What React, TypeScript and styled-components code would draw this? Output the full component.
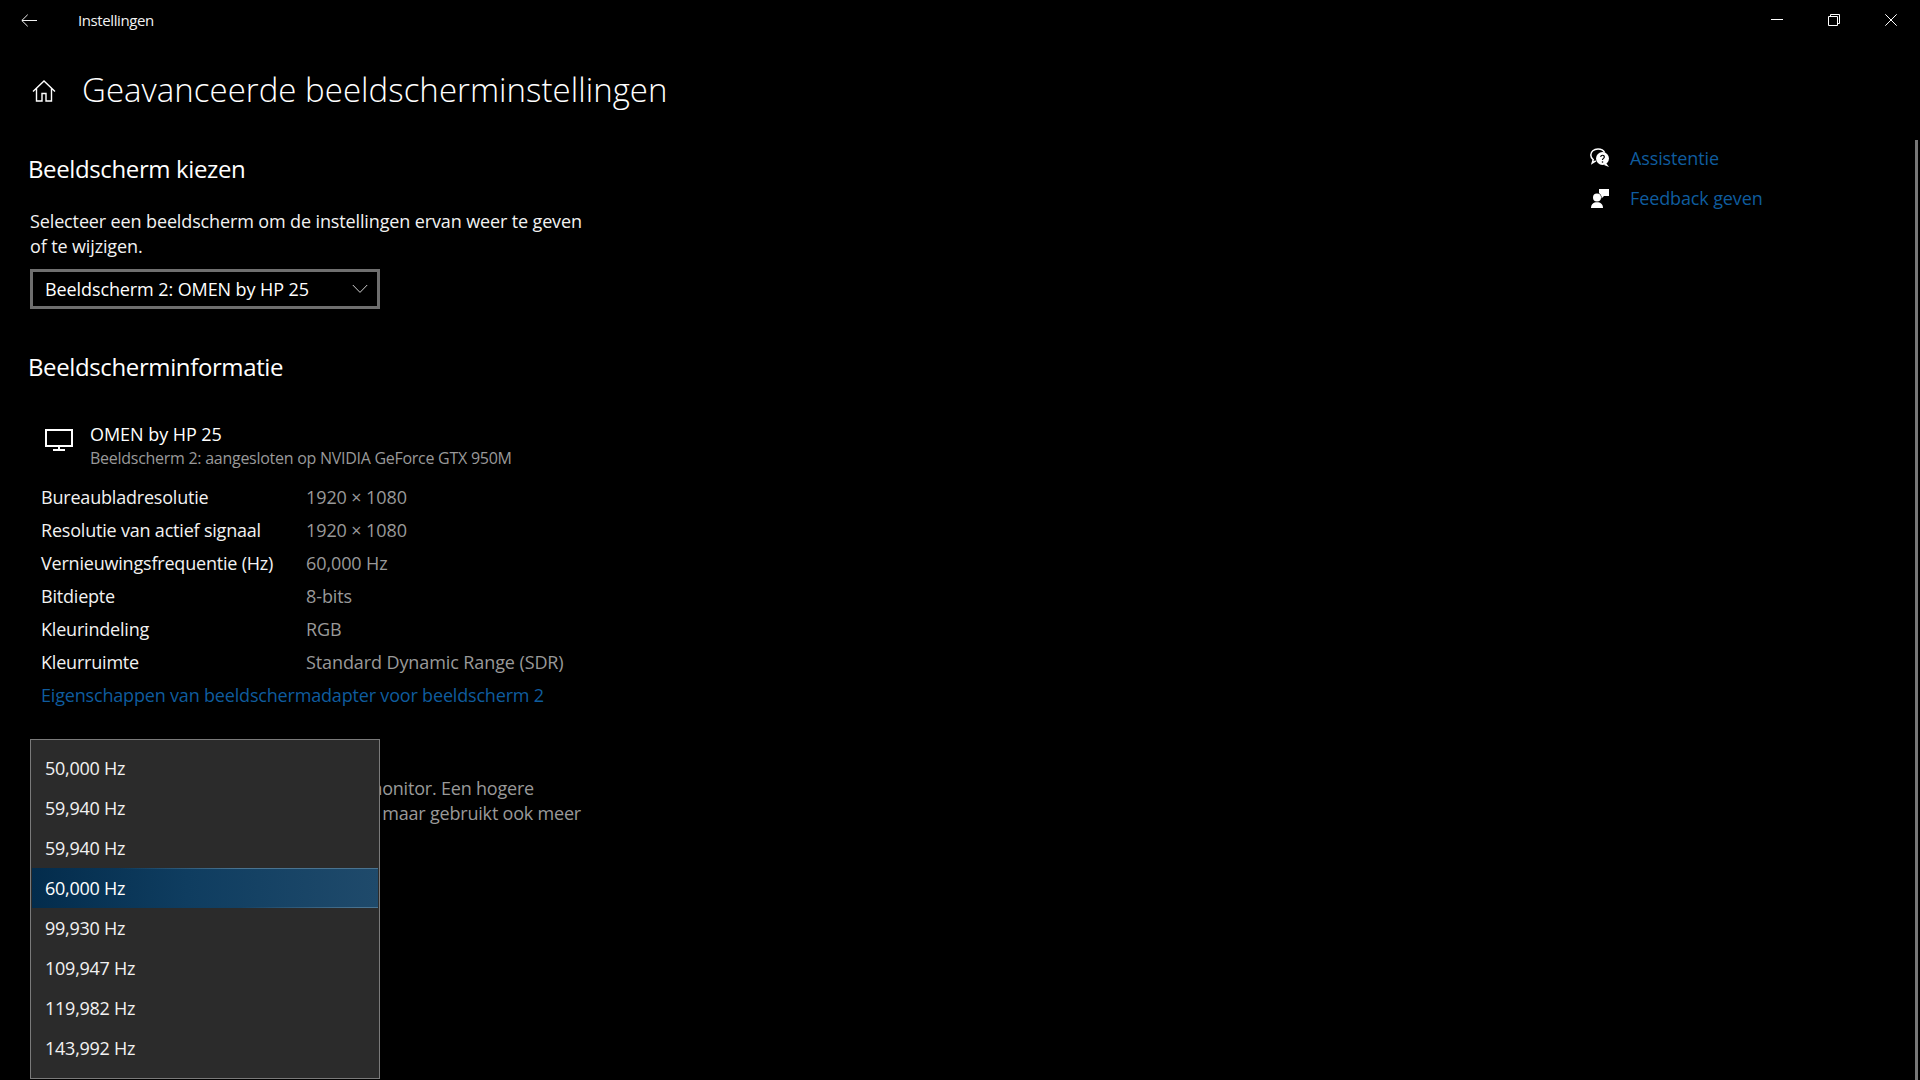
import styled, { createGlobalStyle } from "styled-components";

const GlobalStyle = createGlobalStyle`
  html, body { margin: 0; padding: 0; background: #000; }
  body { font-family: "Open Sans", "Noto Sans", "Liberation Sans", sans-serif; color: #fff; }
`;

/* ── Window ──────────────────────────────────────────── */

const Page = styled.div`
  width: 1920px;
  height: 1080px;
  position: relative;
  overflow: hidden;
  background: #000;
`;

const TitleBar = styled.header`
  height: 40px;
  display: flex;
  align-items: center;
  padding-left: 21px;
`;

const BackIcon = styled.svg`
  width: 16px;
  height: 13px;
  display: block;
  margin-right: 41px;
`;

const AppName = styled.span`
  font-size: 15px;
  letter-spacing: -0.4px;
  color: #f2f2f2;
`;

const WindowControls = styled.div`
  margin-left: auto;
  display: flex;
  gap: 45px;
  padding-right: 23px;
  align-items: center;
`;

const ControlIcon = styled.svg`
  width: 12px;
  height: 12px;
  display: block;
`;

const Scrollbar = styled.div`
  position: absolute;
  right: 2px;
  top: 140px;
  bottom: 0;
  width: 3px;
  background: #777;
`;

const Body = styled.div`
  display: flex;
`;

/* ── Main column ─────────────────────────────────────── */

const Main = styled.main`
  width: 1590px;
`;

const PageHeading = styled.div`
  height: 60px;
  margin-top: 20px;
  display: flex;
  align-items: center;
  padding-left: 32px;
  gap: 26px;
`;

const HomeIcon = styled.svg`
  width: 24px;
  height: 24px;
  display: block;
  margin-top: 2px;
`;

const PageTitle = styled.h1`
  margin: -2px 0 0;
  font-size: 33px;
  font-weight: 300;
  letter-spacing: 0.03px;
  white-space: nowrap;
`;

const SectionTitle = styled.h2<{ $top: number }>`
  margin: ${(p) => p.$top}px 0 0 28px;
  font-size: 24px;
  line-height: 32px;
  font-weight: 400;
  letter-spacing: -0.38px;
`;

const Paragraph = styled.p`
  margin: 24px 0 0 30px;
  width: 565px;
  font-size: 18px;
  line-height: 25px;
  letter-spacing: -0.13px;
  color: #f2f2f2;
`;

const Select = styled.div`
  box-sizing: border-box;
  margin: 10px 0 0 30px;
  width: 350px;
  height: 40px;
  border: 3px solid #6f6f6f;
  display: flex;
  align-items: center;
  justify-content: space-between;
  padding: 0 9px 0 12px;
  font-size: 18px;
  letter-spacing: -0.1px;
`;

const Chevron = styled.svg`
  width: 16px;
  height: 10px;
  display: block;
`;

/* ── Display info ────────────────────────────────────── */

const MonitorRow = styled.div`
  margin: 39px 0 0 45px;
  display: flex;
  gap: 17px;
  align-items: flex-start;
`;

const MonitorIcon = styled.svg`
  width: 28px;
  height: 22px;
  display: block;
  margin-top: 7px;
`;

const MonitorText = styled.div`
  display: flex;
  flex-direction: column;
`;

const MonitorName = styled.span`
  font-size: 18px;
  line-height: 24px;
  letter-spacing: -0.05px;
`;

const MonitorSub = styled.span`
  font-size: 16px;
  line-height: 24px;
  letter-spacing: -0.27px;
  color: #999;
`;

const InfoList = styled.dl`
  margin: 10px 0 0 41px;
  display: grid;
  grid-template-columns: 265px 1fr;
  grid-auto-rows: 33px;
  align-items: center;
  font-size: 18px;
  letter-spacing: -0.2px;
`;

const InfoLabel = styled.dt`
  color: #f2f2f2;
`;

const InfoValue = styled.dd`
  margin: 0;
  letter-spacing: -0.1px;
  color: #999;
`;

const AdapterLink = styled.a`
  display: block;
  margin: 1px 0 0 41px;
  font-size: 18px;
  line-height: 33px;
  letter-spacing: -0.18px;
  color: #0f5c9e;
`;

/* ── Refresh rate section with open list ─────────────── */

const RefreshSection = styled.section`
  position: relative;
  margin-top: 27px;
  height: 340px;
`;

const RefreshText = styled.p`
  margin: 0;
  padding-top: 37px;
  padding-left: 30px;
  width: 551px;
  font-size: 18px;
  line-height: 25px;
  letter-spacing: -0.2px;
  color: #999;
`;

const RefreshLine = styled.span`
  display: block;
  text-align: right;
  white-space: nowrap;
`;

const ShortLine = styled(RefreshLine)`
  padding-right: 47px;
`;

const Popup = styled.ul`
  box-sizing: border-box;
  position: absolute;
  left: 30px;
  top: 0;
  width: 350px;
  height: 340px;
  margin: 0;
  padding: 8px 1px;
  list-style: none;
  background: #2b2b2b;
  border: 1px solid #7a7a7a;
`;

const PopupItem = styled.li<{ $selected?: boolean }>`
  height: 40px;
  display: flex;
  align-items: center;
  padding-left: 13px;
  font-size: 18px;
  letter-spacing: -0.25px;
  color: #f2f2f2;
  ${(p) =>
    p.$selected &&
    `
    background:
      linear-gradient(90deg, rgba(70,110,140,0) 25%, #4a7390 60%) top / 100% 1px no-repeat,
      linear-gradient(90deg, rgba(70,110,140,0) 60%, #4a7390 95%) bottom / 100% 1px no-repeat,
      linear-gradient(90deg, #032c4c 0%, #0f3d60 45%, #1f4a6b 100%);
    color: #fff;
  `}
`;

/* ── Right column ────────────────────────────────────── */

const Aside = styled.aside`
  padding-top: 98px;
  display: flex;
  flex-direction: column;
`;

const HelpLink = styled.a`
  height: 40px;
  display: flex;
  align-items: center;
  gap: 20px;
  font-size: 18px;
  letter-spacing: -0.12px;
  color: #0f5c9e;
`;

const HelpIcon = styled.svg`
  width: 20px;
  height: 20px;
  display: block;
`;

/* ── Data ────────────────────────────────────────────── */

const INFO = [
  ["Bureaubladresolutie", "1920 × 1080"],
  ["Resolutie van actief signaal", "1920 × 1080"],
  ["Vernieuwingsfrequentie (Hz)", "60,000 Hz"],
  ["Bitdiepte", "8-bits"],
  ["Kleurindeling", "RGB"],
  ["Kleurruimte", "Standard Dynamic Range (SDR)"],
];

const RATES = [
  "50,000 Hz",
  "59,940 Hz",
  "59,940 Hz",
  "60,000 Hz",
  "99,930 Hz",
  "109,947 Hz",
  "119,982 Hz",
  "143,992 Hz",
];

/* ── Page ────────────────────────────────────────────── */

export default function App() {
  return (
    <Page>
      <GlobalStyle />
      <TitleBar>
        <BackIcon viewBox="0 0 16 13" fill="none" stroke="#f2f2f2" strokeWidth="1">
          <path d="M16 6.500H1M6.700 .7 .8 6.500l5.900 5.800" />
        </BackIcon>
        <AppName>Instellingen</AppName>
        <WindowControls>
          <ControlIcon viewBox="0 0 12 12" fill="none" stroke="#fff" strokeWidth="1">
            <path d="M0 5.500h12" />
          </ControlIcon>
          <ControlIcon viewBox="0 0 12 12" fill="none" stroke="#fff" strokeWidth="1">
            <path d="M.5 2.500h9v9h-9zM2.500 2.500v-2h9v9h-2" />
          </ControlIcon>
          <ControlIcon viewBox="0 0 12 12" fill="none" stroke="#fff" strokeWidth="1">
            <path d="M.3.3l11.400 11.400M11.700.3.3 11.700" />
          </ControlIcon>
        </WindowControls>
      </TitleBar>

      <Body>
        <Main>
          <PageHeading>
            <HomeIcon viewBox="0 0 24 24" fill="none" stroke="#fff" strokeWidth="1.400">
              <path d="M1 12.500 12 2l11 10.500M4.500 9.500v12.500h5.500v-7.500h4V22h5.500V9.500" />
            </HomeIcon>
            <PageTitle>Geavanceerde beeldscherminstellingen</PageTitle>
          </PageHeading>

          <SectionTitle $top={33}>Beeldscherm kiezen</SectionTitle>
          <Paragraph>
            Selecteer een beeldscherm om de instellingen ervan weer te geven of te wijzigen.
          </Paragraph>
          <Select>
            <span>Beeldscherm 2: OMEN by HP 25</span>
            <Chevron viewBox="0 0 16 10" fill="none" stroke="#d0d0d0" strokeWidth="1">
              <path d="M.8 1 8 8.400 15.200 1" />
            </Chevron>
          </Select>

          <SectionTitle $top={42}>Beeldscherminformatie</SectionTitle>
          <MonitorRow>
            <MonitorIcon viewBox="0 0 28 22" fill="none" stroke="#fff" strokeWidth="2">
              <path d="M1 1h26v16H1zM14 17v4M8 21h12" />
            </MonitorIcon>
            <MonitorText>
              <MonitorName>OMEN by HP 25</MonitorName>
              <MonitorSub>Beeldscherm 2: aangesloten op NVIDIA GeForce GTX 950M</MonitorSub>
            </MonitorText>
          </MonitorRow>
          <InfoList>
            {INFO.flatMap(([label, value]) => [
              <InfoLabel key={label}>{label}</InfoLabel>,
              <InfoValue key={label + "-value"}>{value}</InfoValue>,
            ])}
          </InfoList>
          <AdapterLink>Eigenschappen van beeldschermadapter voor beeldscherm 2</AdapterLink>

          <RefreshSection>
            <RefreshText>
              <ShortLine>Kies de vernieuwingsfrequentie voor je monitor. Een hogere</ShortLine>
              <RefreshLine>frequentie zorgt voor vloeiender beeld maar gebruikt ook meer</RefreshLine>
            </RefreshText>
            <Popup>
              {RATES.map((rate, i) => (
                <PopupItem key={i} $selected={i === 3}>
                  {rate}
                </PopupItem>
              ))}
            </Popup>
          </RefreshSection>
        </Main>

        <Aside>
          <HelpLink>
            <HelpIcon viewBox="0 0 20 20">
              <path
                d="M8 1C3.800 1 .8 3.600 .8 7c0 1.900.9 3.500 2.400 4.600L2.200 15l3.600-2.200"
                fill="none"
                stroke="#fff"
                strokeWidth="1.500"
              />
              <path d="M8 1c3 0 5.600 1.400 6.600 3.600" fill="none" stroke="#fff" strokeWidth="1.500" />
              <circle cx="12.500" cy="10.500" r="6.500" fill="#fff" />
              <path d="M16 15l3 4-5-2z" fill="#fff" />
              <path d="M10.700 9c.2-2.400 3.800-2.200 3.600 0 0 1.400-1.800 1.400-1.800 3" fill="none" stroke="#000" strokeWidth="1.200" />
              <circle cx="12.500" cy="14" r=".8" fill="#000" />
            </HelpIcon>
            <span>Assistentie</span>
          </HelpLink>
          <HelpLink>
            <HelpIcon viewBox="0 0 20 20" fill="#fff">
              <circle cx="7" cy="9.500" r="4" />
              <path d="M1 20c0-4 2.500-5.800 6-5.800s6 1.800 6 5.800z" />
              <path d="M9 1h10v7h-5l-2.500 2.500V8.300A5.500 5.500 0 0 0 9 5z" />
            </HelpIcon>
            <span>Feedback geven</span>
          </HelpLink>
        </Aside>
      </Body>
      <Scrollbar />
    </Page>
  );
}
